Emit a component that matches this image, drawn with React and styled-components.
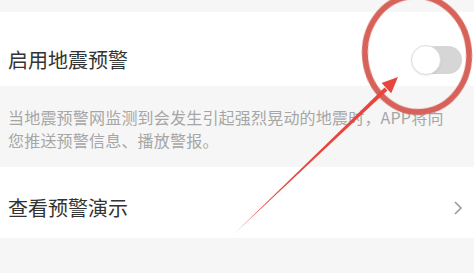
import React from "react";
import styled, { createGlobalStyle } from "styled-components";

const GlobalStyle = createGlobalStyle`
  html, body {
    margin: 0;
    padding: 0;
    background: #f6f6f6;
  }
  body {
    font-family: "Noto Sans CJK SC", "Noto Sans", sans-serif;
  }
`;

const Page = styled.div`
  position: relative;
  width: 474px;
  height: 273px;
  overflow: hidden;
  background: #f6f6f6;
  padding-top: 12px;
  box-sizing: border-box;
`;

const Card = styled.div`
  background: #ffffff;
  height: ${(props) => props.height}px;
  padding: ${(props) => props.top}px 10px 0 8px;
  box-sizing: border-box;
`;

const Row = styled.div`
  display: flex;
  align-items: center;
  justify-content: space-between;
  height: 28px;
`;

const Title = styled.div`
  font-size: 20px;
  color: #333333;
  line-height: 28px;
`;

const Hint = styled.div`
  padding: 20px 18px 15px 8px;
  font-size: 16px;
  letter-spacing: 0.2px;
  line-height: 23px;
  color: #a6a6a6;
  height: 81px;
  box-sizing: border-box;
`;

const Switch = styled.div`
  position: relative;
  width: 50px;
  height: 28px;
  border-radius: 14px;
  background: #d6d6d6;
  margin-right: 2px;
`;

const Knob = styled.div`
  position: absolute;
  left: -1px;
  top: -1px;
  width: 28px;
  height: 28px;
  border-radius: 50%;
  background: #ffffff;
  border: 1px solid #dcdcdc;
  box-shadow: 0 1px 2px rgba(0, 0, 0, 0.08);
`;

const Overlay = styled.svg`
  position: absolute;
  left: 0;
  top: 0;
  pointer-events: none;
`;

const Chevron = () => (
  <svg width="12" height="16" viewBox="0 0 12 16">
    <path d="M3 2 L9 8 L3 14" fill="none" stroke="#9a9a9a" strokeWidth="1.6" />
  </svg>
);

export default function App() {
  return (
    <>
      <GlobalStyle />
      <Page>
        <Card height={74} top={34}>
          <Row>
            <Title>启用地震预警</Title>
            <Switch>
              <Knob />
            </Switch>
          </Row>
        </Card>
        <Hint>
          当地震预警网监测到会发生引起强烈晃动的地震时，APP将向您推送预警信息、播放警报。
        </Hint>
        <Card height={71} top={27}>
          <Row>
            <Title>查看预警演示</Title>
            <Chevron />
          </Row>
        </Card>
        <Overlay width="474" height="273" viewBox="0 0 474 273">
          <defs>
            <filter id="soft" x="-20%" y="-20%" width="140%" height="140%">
              <feGaussianBlur stdDeviation="0.7" />
            </filter>
          </defs>
          <ellipse
            cx="417"
            cy="54"
            rx="52"
            ry="58"
            transform="rotate(-6 417 54)"
            fill="none"
            stroke="#d6625a"
            strokeWidth="6"
            filter="url(#soft)"
          />
          <polygon
            points="235,233 387.4,90.4 384.6,87.6"
            fill="#e8453c"
          />
          <polygon
            points="398,77 391.2,93.2 381.6,83"
            fill="#e8453c"
          />
        </Overlay>
      </Page>
    </>
  );
}
